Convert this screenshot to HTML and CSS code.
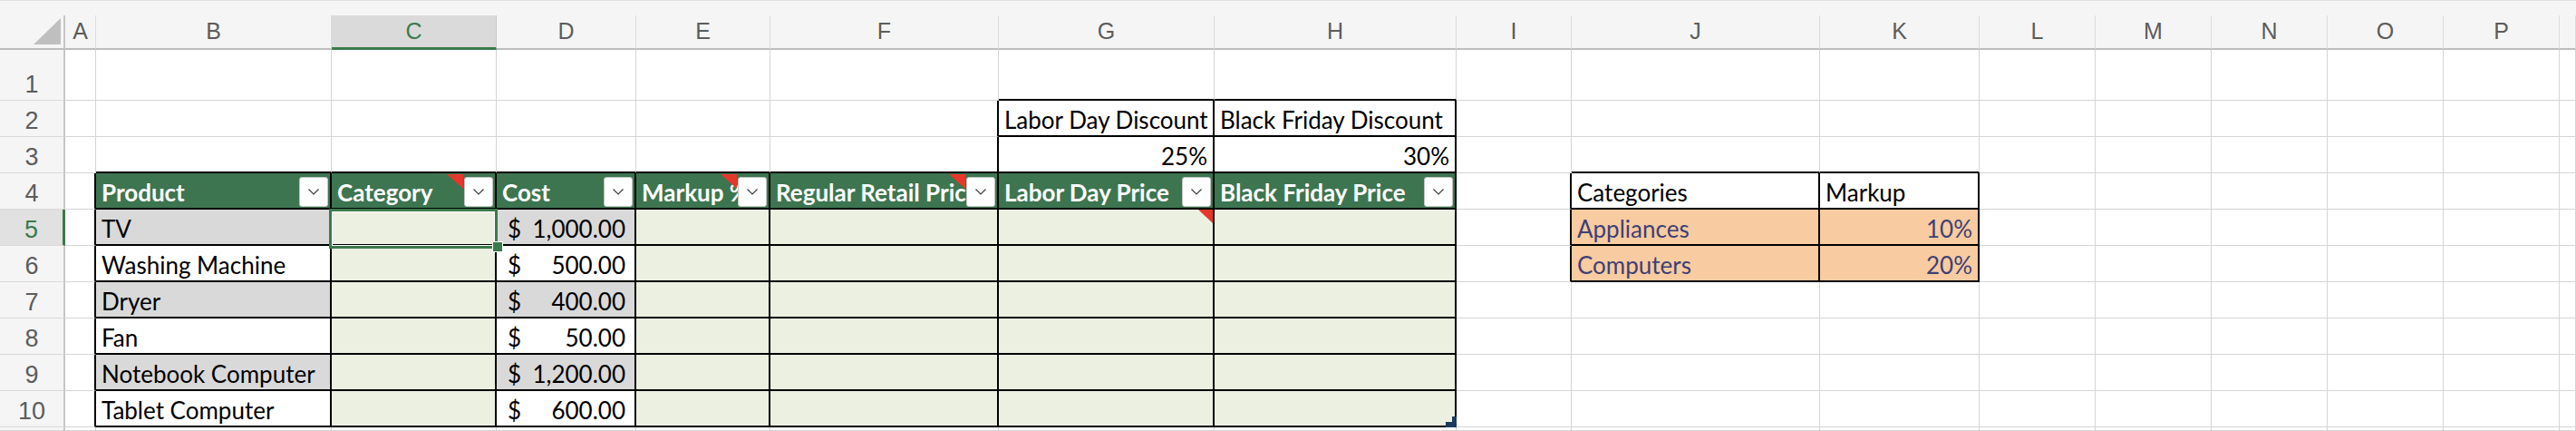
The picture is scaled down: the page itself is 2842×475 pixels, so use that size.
FILE: index.html
```html
<!DOCTYPE html>
<html lang="en">
<head>
<meta charset="utf-8">
<title>Sheet</title>
<link rel="stylesheet" href="styles.css">
</head>
<body>
<div class="topbar"></div>
<div class="sheet">
  <!-- column headers -->
  <div class="corner"><svg class="corner-tri" width="70" height="36" viewBox="0 0 70 36"><polygon points="67,3 67,32 37,32" fill="#bfbfbf"/></svg></div>
  <div class="ch">A</div><div class="ch">B</div><div class="ch sel">C</div><div class="ch">D</div><div class="ch">E</div><div class="ch">F</div><div class="ch">G</div><div class="ch">H</div><div class="ch">I</div><div class="ch">J</div><div class="ch">K</div><div class="ch">L</div><div class="ch">M</div><div class="ch">N</div><div class="ch">O</div><div class="ch">P</div><div class="ch"></div>

  <!-- row 1 -->
  <div class="rh">1</div>
  <div class="c"></div><div class="c"></div><div class="c"></div><div class="c"></div><div class="c"></div><div class="c"></div>
  <div class="c bb"></div><div class="c bb"></div>
  <div class="c"></div><div class="c"></div><div class="c"></div><div class="c"></div><div class="c"></div><div class="c"></div><div class="c"></div><div class="c"></div><div class="c"></div>

  <!-- row 2 -->
  <div class="rh">2</div>
  <div class="c"></div><div class="c"></div><div class="c"></div><div class="c"></div><div class="c"></div><div class="c br"></div>
  <div class="c br bb">Labor Day Discount</div><div class="c br bb">Black Friday Discount</div>
  <div class="c"></div><div class="c"></div><div class="c"></div><div class="c"></div><div class="c"></div><div class="c"></div><div class="c"></div><div class="c"></div><div class="c"></div>

  <!-- row 3 -->
  <div class="rh">3</div>
  <div class="c"></div><div class="c bb"></div><div class="c bb"></div><div class="c bb"></div><div class="c bb"></div><div class="c bb br"></div>
  <div class="c br bb r">25%</div><div class="c br bb r">30%</div>
  <div class="c"></div><div class="c bb"></div><div class="c bb"></div>
  <div class="c"></div><div class="c"></div><div class="c"></div><div class="c"></div><div class="c"></div><div class="c"></div>

  <!-- row 4 -->
  <div class="rh">4</div>
  <div class="c br"></div>
  <div class="c th"><span class="tt">Product</span><span class="dd"><svg width="12" height="7" viewBox="0 0 12 7"><polyline points="0.5,0.5 6,6 11.5,0.5" fill="none" stroke="#3a3a3a" stroke-width="1.2"/></svg></span></div>
  <div class="c th"><span class="tt">Category</span><span class="tri hdr"></span><span class="dd"><svg width="12" height="7" viewBox="0 0 12 7"><polyline points="0.5,0.5 6,6 11.5,0.5" fill="none" stroke="#3a3a3a" stroke-width="1.2"/></svg></span></div>
  <div class="c th"><span class="tt">Cost</span><span class="dd"><svg width="12" height="7" viewBox="0 0 12 7"><polyline points="0.5,0.5 6,6 11.5,0.5" fill="none" stroke="#3a3a3a" stroke-width="1.2"/></svg></span></div>
  <div class="c th"><span class="tt">Markup %</span><span class="tri hdr"></span><span class="dd"><svg width="12" height="7" viewBox="0 0 12 7"><polyline points="0.5,0.5 6,6 11.5,0.5" fill="none" stroke="#3a3a3a" stroke-width="1.2"/></svg></span></div>
  <div class="c th"><span class="tt">Regular Retail Price</span><span class="tri hdr"></span><span class="dd"><svg width="12" height="7" viewBox="0 0 12 7"><polyline points="0.5,0.5 6,6 11.5,0.5" fill="none" stroke="#3a3a3a" stroke-width="1.2"/></svg></span></div>
  <div class="c th"><span class="tt">Labor Day Price</span><span class="dd"><svg width="12" height="7" viewBox="0 0 12 7"><polyline points="0.5,0.5 6,6 11.5,0.5" fill="none" stroke="#3a3a3a" stroke-width="1.2"/></svg></span></div>
  <div class="c th"><span class="tt">Black Friday Price</span><span class="dd"><svg width="12" height="7" viewBox="0 0 12 7"><polyline points="0.5,0.5 6,6 11.5,0.5" fill="none" stroke="#3a3a3a" stroke-width="1.2"/></svg></span></div>
  <div class="c br"></div>
  <div class="c br bb">Categories</div><div class="c br bb">Markup</div>
  <div class="c"></div><div class="c"></div><div class="c"></div><div class="c"></div><div class="c"></div><div class="c"></div>

  <!-- row 5 -->
  <div class="rh sel">5</div>
  <div class="c br"></div>
  <div class="c t gr">TV</div>
  <div class="c t lg active"><span class="selbox"></span><span class="fill"></span></div>
  <div class="c t gr acc"><span>$</span><span>1,000.00</span></div>
  <div class="c t lg"></div><div class="c t lg"></div>
  <div class="c t lg note"><span class="tri cell"></span></div>
  <div class="c t lg"></div>
  <div class="c br"></div>
  <div class="c br bb inp">Appliances</div><div class="c br bb inp r">10%</div>
  <div class="c"></div><div class="c"></div><div class="c"></div><div class="c"></div><div class="c"></div><div class="c"></div>

  <!-- row 6 -->
  <div class="rh">6</div>
  <div class="c br"></div>
  <div class="c t">Washing Machine</div>
  <div class="c t lg"></div>
  <div class="c t acc"><span>$</span><span>500.00</span></div>
  <div class="c t lg"></div><div class="c t lg"></div><div class="c t lg"></div><div class="c t lg"></div>
  <div class="c br"></div>
  <div class="c br bb inp">Computers</div><div class="c br bb inp r">20%</div>
  <div class="c"></div><div class="c"></div><div class="c"></div><div class="c"></div><div class="c"></div><div class="c"></div>

  <!-- row 7 -->
  <div class="rh">7</div>
  <div class="c br"></div>
  <div class="c t gr">Dryer</div>
  <div class="c t lg"></div>
  <div class="c t gr acc"><span>$</span><span>400.00</span></div>
  <div class="c t lg"></div><div class="c t lg"></div><div class="c t lg"></div><div class="c t lg"></div>
  <div class="c"></div><div class="c"></div><div class="c"></div>
  <div class="c"></div><div class="c"></div><div class="c"></div><div class="c"></div><div class="c"></div><div class="c"></div>

  <!-- row 8 -->
  <div class="rh">8</div>
  <div class="c br"></div>
  <div class="c t">Fan</div>
  <div class="c t lg"></div>
  <div class="c t acc"><span>$</span><span>50.00</span></div>
  <div class="c t lg"></div><div class="c t lg"></div><div class="c t lg"></div><div class="c t lg"></div>
  <div class="c"></div><div class="c"></div><div class="c"></div>
  <div class="c"></div><div class="c"></div><div class="c"></div><div class="c"></div><div class="c"></div><div class="c"></div>

  <!-- row 9 -->
  <div class="rh">9</div>
  <div class="c br"></div>
  <div class="c t gr">Notebook Computer</div>
  <div class="c t lg"></div>
  <div class="c t gr acc"><span>$</span><span>1,200.00</span></div>
  <div class="c t lg"></div><div class="c t lg"></div><div class="c t lg"></div><div class="c t lg"></div>
  <div class="c"></div><div class="c"></div><div class="c"></div>
  <div class="c"></div><div class="c"></div><div class="c"></div><div class="c"></div><div class="c"></div><div class="c"></div>

  <!-- row 10 -->
  <div class="rh">10</div>
  <div class="c br"></div>
  <div class="c t">Tablet Computer</div>
  <div class="c t lg"></div>
  <div class="c t acc"><span>$</span><span>600.00</span></div>
  <div class="c t lg"></div><div class="c t lg"></div><div class="c t lg"></div>
  <div class="c t lg resize"><svg class="handle" width="12" height="12" viewBox="0 0 12 12"><path d="M7 0H12V12H0V6H7Z" fill="#1d3a5f"/></svg></div>
  <div class="c"></div><div class="c"></div><div class="c"></div>
  <div class="c"></div><div class="c"></div><div class="c"></div><div class="c"></div><div class="c"></div><div class="c"></div>

  <!-- row 11 (partial) -->
  <div class="rh"></div>
  <div class="c"></div><div class="c"></div><div class="c"></div><div class="c"></div><div class="c"></div><div class="c"></div><div class="c"></div><div class="c"></div>
  <div class="c"></div><div class="c"></div><div class="c"></div>
  <div class="c"></div><div class="c"></div><div class="c"></div><div class="c"></div><div class="c"></div><div class="c"></div>
</div>
</body>
</html>
```

FILE: styles.css
```css
html, body {
  margin: 0;
  padding: 0;
}
body {
  width: 2842px;
  height: 475px;
  overflow: hidden;
  background: #ffffff;
  font-family: Lato, "Noto Sans", sans-serif;
}
.topbar {
  height: 17px;
  box-sizing: border-box;
  background: #f5f5f5;
  border-top: 1px solid #e2e2e2;
}
.sheet {
  display: grid;
  grid-template-columns: 72px 34px 260px 182px 154px 148px 252px 238px 267px 127px 274px 176px 128px 128px 128px 128px 128px 1fr;
  grid-template-rows: 38px 56px repeat(9, 40px) 1fr;
  height: 458px;
}
.sheet > div {
  box-sizing: border-box;
  min-width: 0;
  min-height: 0;
}

/* headers */
.corner {
  background: #f5f5f5;
  border-right: 2px solid #c6c6c6;
  border-bottom: 2px solid #bdbdbd;
}
.corner-tri {
  display: block;
}
.ch {
  background: #f5f5f5;
  border-right: 1px solid #dcdcdc;
  border-bottom: 2px solid #bdbdbd;
  font-family: "Liberation Sans", Arial, sans-serif;
  font-size: 25px;
  line-height: 34px;
  color: #5c5c5c;
  text-align: center;
}
.ch.sel {
  background: #dadada;
  color: #3b7a4c;
  border-bottom: 3px solid #3b7a4c;
  border-right-color: #c8c8c8;
}
.rh {
  background: #f5f5f5;
  border-right: 2px solid #c6c6c6;
  border-bottom: 1px solid #d9d9d9;
  font-family: "Liberation Sans", Arial, sans-serif;
  font-size: 27px;
  line-height: 27px;
  color: #5c5c5c;
  display: flex;
  align-items: flex-end;
  justify-content: center;
  padding-bottom: 3px;
}
.rh.sel {
  background: #e1e1e1;
  color: #3b7a4c;
  border-right: 3px solid #3b7a4c;
}

/* cells */
.c {
  border-right: 1px solid #d5d5d5;
  border-bottom: 1px solid #d5d5d5;
  font-size: 26px;
  line-height: 40px;
  padding: 1px 6px 0 6px;
  white-space: nowrap;
  overflow: hidden;
  color: #000000;
}
.br {
  border-right: 2px solid #000000;
}
.bb {
  border-bottom: 2px solid #000000;
}
.t {
  border-right: 2px solid #000000;
  border-bottom: 2px solid #000000;
}
.r {
  text-align: right;
}
.gr {
  background: #d9d9d9;
}
.lg {
  background: #ebf0e1;
}
.inp {
  background: #f8cba0;
  color: #3f3f76;
}
.acc {
  display: flex;
  justify-content: space-between;
  padding: 1px 10px 0 12px;
}

/* table header row */
.th {
  position: relative;
  overflow: visible;
  display: flex;
  align-items: flex-end;
  padding: 0 2px 0 6px;
  background: #3d7550;
  color: #ffffff;
  font-weight: 700;
  border-right: 2px solid #000000;
  border-bottom: 2px solid #000000;
}
.tt {
  flex: 1 1 auto;
  min-width: 0;
  align-self: stretch;
  overflow: hidden;
  white-space: nowrap;
  line-height: 40px;
  padding-top: 1px;
  box-sizing: border-box;
}
.dd {
  flex: none;
  width: 32px;
  height: 33px;
  margin-bottom: 1px;
  box-sizing: border-box;
  background: #ffffff;
  border: 1px solid #c4c4c4;
  border-radius: 3px;
  display: flex;
  align-items: center;
  justify-content: center;
}
.dd svg {
  display: block;
}

/* comment indicators */
.tri {
  position: absolute;
  background: #e5382a;
  clip-path: polygon(0 0, 100% 0, 100% 100%);
}
.tri.hdr {
  right: 35px;
  top: 1px;
  width: 18px;
  height: 16px;
}
.note {
  position: relative;
}
.tri.cell {
  right: -1px;
  top: 0;
  width: 17px;
  height: 16px;
}

/* active cell */
.active {
  position: relative;
  overflow: visible;
}
.selbox {
  position: absolute;
  left: -3px;
  top: -1px;
  width: 186px;
  height: 44px;
  box-sizing: border-box;
  border: 3px solid #3b7a4c;
  box-shadow: inset 0 0 0 1px #ffffff;
  z-index: 2;
}
.fill {
  position: absolute;
  left: 177px;
  top: 35px;
  width: 12px;
  height: 12px;
  box-sizing: border-box;
  background: #3b7a4c;
  border: 1px solid #ffffff;
  z-index: 3;
}

/* table resize handle */
.resize {
  position: relative;
  overflow: visible;
}
.handle {
  position: absolute;
  right: -2px;
  bottom: -2px;
  display: block;
}
```
